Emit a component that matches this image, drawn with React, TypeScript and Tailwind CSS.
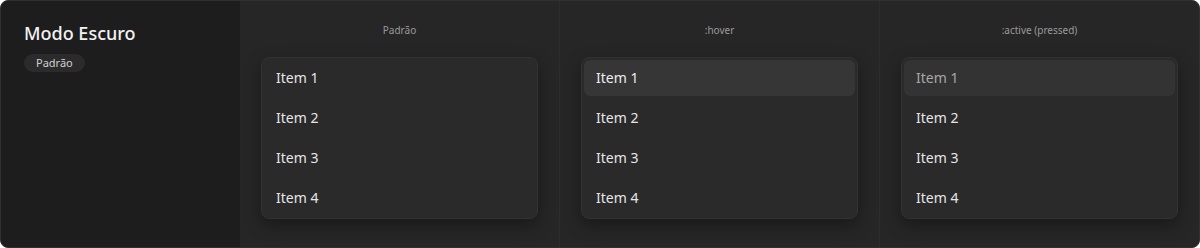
import React from "react";

type Variant = "default" | "hover" | "active";

const columns: { label: string; variant: Variant }[] = [
  { label: "Padrão", variant: "default" },
  { label: ":hover", variant: "hover" },
  { label: ":active (pressed)", variant: "active" },
];

const items = ["Item 1", "Item 2", "Item 3", "Item 4"];

function Menu({ variant }: { variant: Variant }) {
  return (
    <div className="flex flex-col gap-1 rounded-lg border border-[#323232] bg-[#2a2a2a] p-[2px] shadow-[0_6px_16px_rgba(0,0,0,0.35)]">
      {items.map((item, i) => {
        const first = i === 0;
        let cls = "text-[#e6e6e6]";
        if (first && variant === "hover") cls = "bg-[#363636] text-[#ededed]";
        if (first && variant === "active") cls = "bg-[#333333] text-[#a8a8a8]";
        return (
          <div key={item} className={`flex h-9 items-center rounded-md px-3 text-sm ${cls}`}>
            {item}
          </div>
        );
      })}
    </div>
  );
}

export default function App() {
  return (
    <div
      className="flex h-[248px] w-[1200px] overflow-hidden rounded-lg border border-[#303030] bg-[#262626]"
      style={{ fontFamily: '"Noto Sans", "Open Sans", sans-serif' }}
    >
      <div className="w-[239px] shrink-0 bg-[#1d1d1d] px-[23px] pt-[18px]">
        <h1 className="text-lg font-medium leading-7 text-[#f2f2f2]">Modo Escuro</h1>
        <span className="mt-[7px] inline-flex h-[18px] items-center rounded-full bg-[#2b2b2b] px-3 text-[11px] text-[#d0d0d0]">
          Padrão
        </span>
      </div>
      {columns.map((col, i) => (
        <div
          key={col.label}
          className={`flex-1 px-[21px] pt-[21px] ${i < 2 ? "border-r border-[#2d2d2d]" : ""}`}
        >
          <div className="text-center text-[10px] leading-4 text-[#9a9a9a]">{col.label}</div>
          <div className="mt-[19px]">
            <Menu variant={col.variant} />
          </div>
        </div>
      ))}
    </div>
  );
}
